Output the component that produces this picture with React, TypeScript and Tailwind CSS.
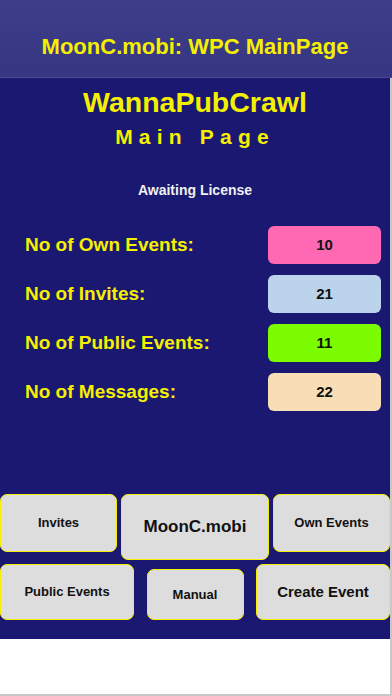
import React from "react";

const stats = [
  { label: "No of Own Events:", value: "10", color: "bg-[#ff69b4]" },
  { label: "No of Invites:", value: "21", color: "bg-[#bcd3ec]" },
  { label: "No of Public Events:", value: "11", color: "bg-[#7cfc00]" },
  { label: "No of Messages:", value: "22", color: "bg-[#f7deb6]" },
];

function Btn({ label, className }: { label: string; className: string }) {
  return (
    <button
      className={`flex items-center justify-center rounded-[7px] border-[1.5px] border-[#f5f000] bg-[#dddddd] font-bold text-[#111] ${className}`}
    >
      {label}
    </button>
  );
}

export default function App() {
  return (
    <div
      className="flex h-[696px] w-[392px] flex-col overflow-hidden bg-white"
      style={{ fontFamily: '"Liberation Sans", Arial, sans-serif' }}
    >
      {/* nav bar */}
      <div className="flex h-[78px] shrink-0 items-end justify-center border-b border-[#4a4a94] bg-gradient-to-b from-[#3e3d8a] to-[#373682] pb-[14px] pr-[2px]">
        <span className="text-[22px] font-bold text-[#f5f000]">MoonC.mobi: WPC MainPage</span>
      </div>

      <div className="flex h-[561px] shrink-0 flex-col border-r-2 border-[#c8c8c8] bg-[#1a1870]">
        <div className="mt-[7px] text-center text-[28.5px] font-bold leading-[34px] text-[#f5f000]">WannaPubCrawl</div>
        <div className="mt-[3px] text-center text-[21px] font-bold leading-[30px] tracking-[6.2px] text-[#f5f000]">Main Page</div>
        <div className="mt-[30px] text-center text-[14px] font-bold leading-[17px] text-[#f0f0f0]">Awaiting License</div>

        <div className="mt-[27px] flex flex-col gap-[11px] pl-[25px] pr-[9px]">
          {stats.map((s) => (
            <div key={s.label} className="flex items-center justify-between">
              <span className="text-[19px] font-bold text-[#f5f000]">{s.label}</span>
              <div
                className={`flex h-[38px] w-[113px] items-center justify-center rounded-[6px] text-[15px] font-bold text-[#111] ${s.color}`}
              >
                {s.value}
              </div>
            </div>
          ))}
        </div>

        <div className="mt-auto flex flex-col gap-[4px] pb-[19px]">
          <div className="flex items-start gap-[4px]">
            <Btn label="Invites" className="h-[58px] w-[117px] pb-[1px] text-[13px]" />
            <Btn label="MoonC.mobi" className="h-[66px] w-[148px] text-[17px]" />
            <Btn label="Own Events" className="h-[58px] w-[117px] pb-[1px] text-[13px]" />
          </div>
          <div className="flex items-end justify-between">
            <Btn label="Public Events" className="h-[56px] w-[134px] text-[13px]" />
            <Btn label="Manual" className="h-[51px] w-[97px] text-[13px]" />
            <Btn label="Create Event" className="h-[56px] w-[134px] text-[15px]" />
          </div>
        </div>
      </div>

      <div className="flex-1 border-r-2 border-b-2 border-[#c8c8c8] bg-white" />
    </div>
  );
}
